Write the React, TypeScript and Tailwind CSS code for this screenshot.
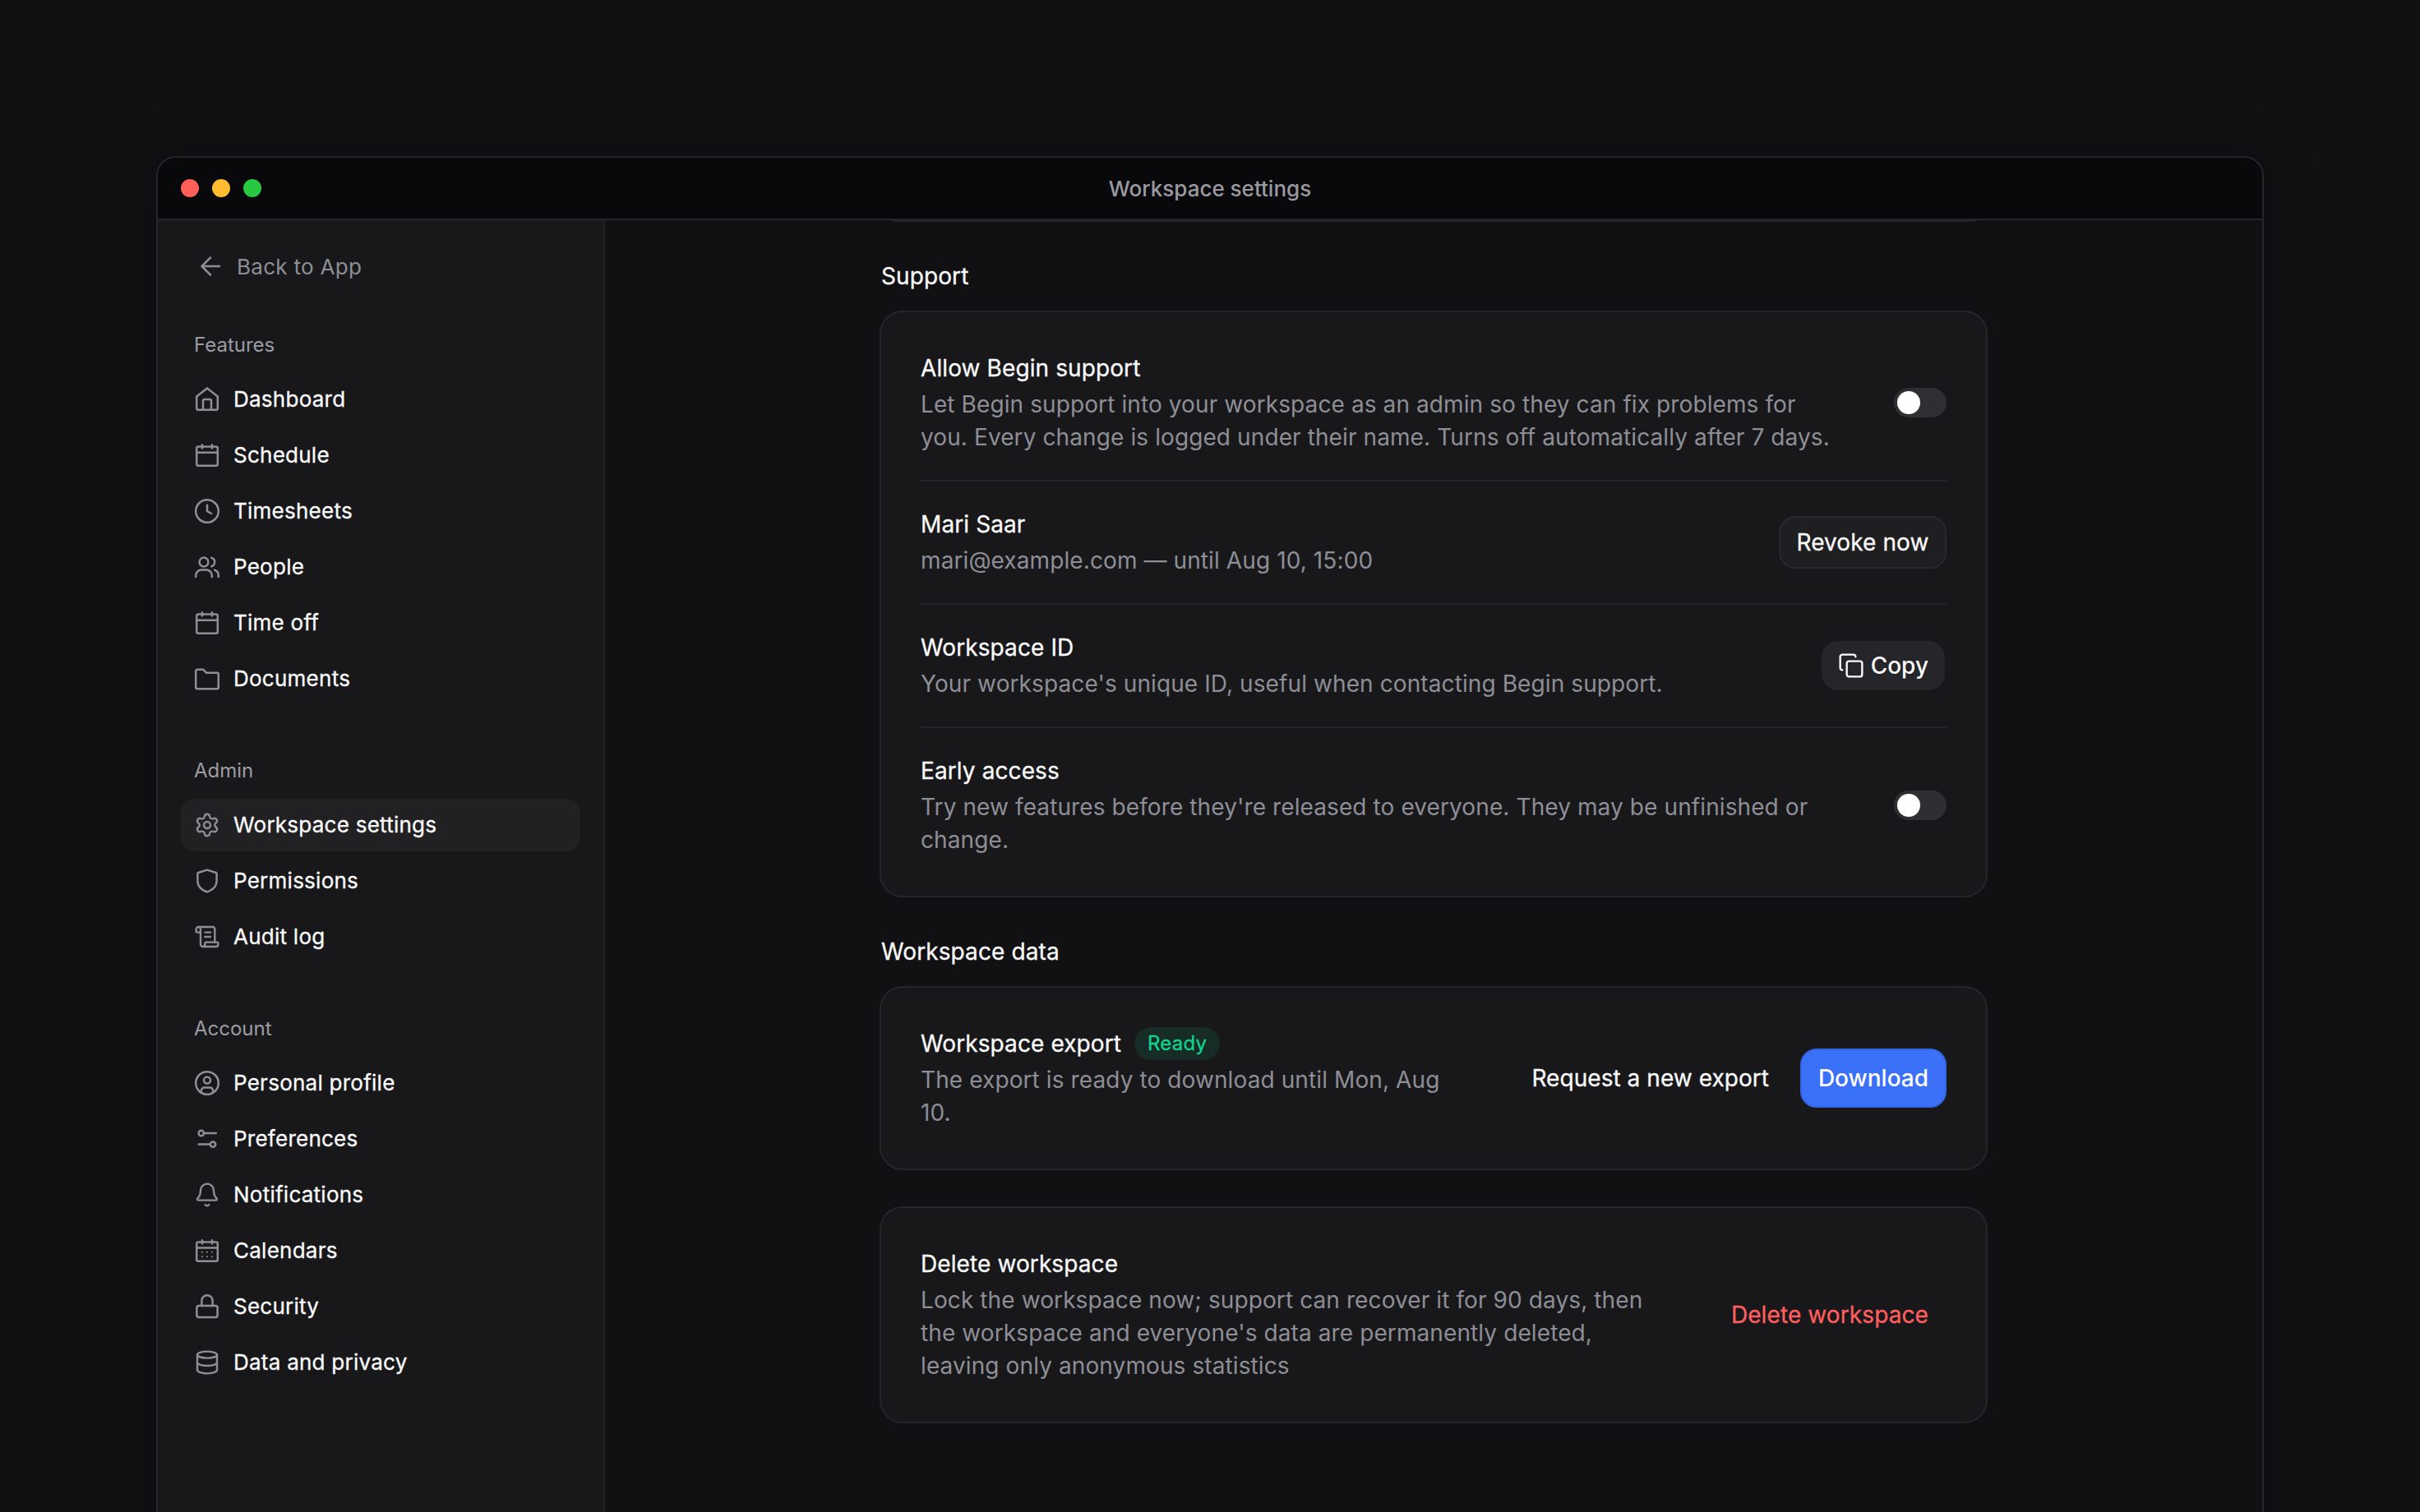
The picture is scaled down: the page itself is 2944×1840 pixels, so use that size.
import { ReactNode } from "react"
import { Bell, Copy, Database, ScrollText, Settings } from "lucide-react"

const Svg = ({ children }: { children: ReactNode }) => (
  <svg viewBox="0 0 16 16" fill="none" stroke="currentColor" strokeWidth="1.25" strokeLinecap="round" strokeLinejoin="round" className="w-8 h-8 shrink-0 text-[#8e8e96]">
    {children}
  </svg>
)

const lucideIcon = "w-8 h-8 shrink-0 text-[#8e8e96]"

const HomeIcon = () => (
  <Svg>
    <path d="M8 1.2 14.4 6.3V13.6a.8.8 0 0 1-.8.8H2.4a.8.8 0 0 1-.8-.8V6.3Z" />
    <path d="M5.5 14.4V9a1 1 0 0 1 1-1h3a1 1 0 0 1 1 1v5.4" />
  </Svg>
)

const CalendarIcon = () => (
  <Svg>
    <rect x="1.6" y="2.8" width="12.8" height="11.6" rx="1" />
    <path d="M1.6 6.4h12.8M5 1.6v2.2M11 1.6v2.2" />
  </Svg>
)

const ClockIcon = () => (
  <Svg>
    <circle cx="8" cy="8" r="6.9" />
    <path d="M8 4.4V8l2.6 1.5" />
  </Svg>
)

const PeopleIcon = () => (
  <Svg>
    <circle cx="6" cy="5" r="2.7" />
    <path d="M1.1 14v-.9a3.3 3.3 0 0 1 3.3-3.3h3.2a3.3 3.3 0 0 1 3.3 3.3v.9" />
    <path d="M10.6 2.4a2.7 2.7 0 0 1 0 5.2M12.6 9.9a3.3 3.3 0 0 1 2.3 3.2v.9" />
  </Svg>
)

const FolderIcon = () => (
  <Svg>
    <path d="M1.1 3.4a1 1 0 0 1 1-1h3.5l2 2h6.3a1 1 0 0 1 1 1v7.7a1 1 0 0 1-1 1H2.1a1 1 0 0 1-1-1Z" />
  </Svg>
)

const ShieldIcon = () => (
  <Svg>
    <path d="M8 1.3 13.4 3a.6.6 0 0 1 .4.6V8c0 3.5-2.8 5.6-5.5 6.6a.9.9 0 0 1-.6 0C5 13.6 2.2 11.5 2.2 8V3.6a.6.6 0 0 1 .4-.6Z" />
  </Svg>
)

const ProfileIcon = () => (
  <Svg>
    <circle cx="8" cy="8" r="6.9" />
    <circle cx="8" cy="6.3" r="2" />
    <path d="M4.4 13v-.3a1.9 1.9 0 0 1 1.9-1.9h3.4a1.9 1.9 0 0 1 1.9 1.9v.3" />
  </Svg>
)

const SlidersIcon = () => (
  <Svg>
    <circle cx="4.4" cy="4.5" r="1.6" />
    <path d="M6 4.5h7.4" />
    <circle cx="11.5" cy="11.3" r="1.6" />
    <path d="M2.9 11.3h7" />
  </Svg>
)

const CalendarDotsIcon = () => (
  <Svg>
    <rect x="1.6" y="2.8" width="12.8" height="11.6" rx="1" />
    <path d="M1.6 6.2h12.8M5 1.6v2.2M11 1.6v2.2" />
    <path strokeWidth="1" d="M5 8.9h.01M8 8.9h.01M11 8.9h.01M5 11.6h.01M8 11.6h.01M11 11.6h.01" />
  </Svg>
)

const LockIcon = () => (
  <Svg>
    <rect x="1.7" y="7.5" width="12.6" height="7" rx="1.2" />
    <path d="M4.7 7.5V4.4a3.3 3.3 0 0 1 6.6 0v3.1" />
  </Svg>
)

const sections = [
  {
    label: "Features",
    className: "mt-[46px]",
    items: [
      { name: "Dashboard", icon: <HomeIcon /> },
      { name: "Schedule", icon: <CalendarIcon /> },
      { name: "Timesheets", icon: <ClockIcon /> },
      { name: "People", icon: <PeopleIcon /> },
      { name: "Time off", icon: <CalendarIcon /> },
      { name: "Documents", icon: <FolderIcon /> },
    ],
  },
  {
    label: "Admin",
    className: "mt-[62px]",
    items: [
      { name: "Workspace settings", icon: <Settings className={lucideIcon} strokeWidth={1.8} />, active: true },
      { name: "Permissions", icon: <ShieldIcon /> },
      { name: "Audit log", icon: <ScrollText className={lucideIcon} strokeWidth={1.8} /> },
    ],
  },
  {
    label: "Account",
    className: "mt-[62px]",
    items: [
      { name: "Personal profile", icon: <ProfileIcon /> },
      { name: "Preferences", icon: <SlidersIcon /> },
      { name: "Notifications", icon: <Bell className={lucideIcon} strokeWidth={1.8} /> },
      { name: "Calendars", icon: <CalendarDotsIcon /> },
      { name: "Security", icon: <LockIcon /> },
      { name: "Data and privacy", icon: <Database className={lucideIcon} strokeWidth={1.8} /> },
    ],
  },
]

function Sidebar() {
  return (
    <aside className="w-[544px] shrink-0 bg-[#18181b] border-r-2 border-[#222225] px-[28px] pt-[24px]">
      <div className="h-[64px] flex items-center gap-4 pl-5 text-[#8e8e96] text-[26px] tracking-[0.3px]">
        <svg viewBox="0 0 32 32" fill="none" stroke="currentColor" strokeWidth="2.5" strokeLinecap="round" strokeLinejoin="round" className="w-8 h-8 shrink-0">
          <path d="M27 16H5.5M16 5.5 5.5 16 16 26.5" />
        </svg>
        Back to App
      </div>
      {sections.map((section) => (
        <div key={section.label} className={section.className}>
          <div className="h-[36px] leading-[36px] px-4 mb-4 text-[24px] text-[#9c9ca3]">{section.label}</div>
          <div className="flex flex-col gap-1">
            {section.items.map((item) => (
              <div key={item.name} className={`h-[64px] rounded-[16px] px-4 flex items-center gap-4 text-[26px] leading-[38px] tracking-[0.25px] [-webkit-text-stroke:0.3px] text-[#fafafa] ${"active" in item ? "bg-[#212124]" : ""}`}>
                {item.icon}
                <span className="pb-[1px]">{item.name}</span>
              </div>
            ))}
          </div>
        </div>
      ))}
    </aside>
  )
}

const Toggle = () => (
  <div className="w-[64px] h-[36px] shrink-0 rounded-full bg-[#2f2f33] p-1">
    <div className="w-[28px] h-[28px] rounded-full bg-white" />
  </div>
)

const Title = ({ children }: { children: ReactNode }) => <div className="text-[28px] leading-[40px] tracking-[0.1px] [-webkit-text-stroke:0.3px] text-[#fafafa]">{children}</div>
const Desc = ({ children }: { children: ReactNode }) => <div className="mt-1 text-[28px] leading-[40px] tracking-[0.1px] text-[#8e8e96]">{children}</div>
const SectionTitle = ({ children }: { children: ReactNode }) => <div className="ml-[2px] mb-[22px] mt-[46px] text-[28px] leading-[40px] tracking-[0.1px] [-webkit-text-stroke:0.3px] text-[#fafafa]">{children}</div>

function Main() {
  return (
    <main className="flex-1 min-w-0 bg-[#111113] overflow-hidden">
      <div className="w-[1348px] mx-auto">
        <div className="h-[40px] -mt-[38px] mb-[46px] rounded-[40px] border-2 border-[#26262a] bg-[#18181b]" />

        <SectionTitle>Support</SectionTitle>
        <div className="rounded-[28px] border-2 border-[#26262a] bg-[#18181b] px-12 py-4">
          <div className="py-8 flex items-center justify-between border-b-2 border-[#26262a]">
            <div className="w-[1120px]">
              <Title>Allow Begin support</Title>
              <Desc>Let Begin support into your workspace as an admin so they can fix problems for you. Every change is logged under their name. Turns off automatically after 7 days.</Desc>
            </div>
            <Toggle />
          </div>
          <div className="py-8 flex items-center justify-between border-b-2 border-[#26262a]">
            <div>
              <Title>Mari Saar</Title>
              <Desc>mari@example.com — until Aug 10, 15:00</Desc>
            </div>
            <button className="h-[64px] w-[204px] rounded-[20px] border-2 border-[#29292d] bg-[#1f1f22] text-[28px] tracking-[0.1px] [-webkit-text-stroke:0.3px] text-[#fafafa]">Revoke now</button>
          </div>
          <div className="py-8 flex items-center justify-between border-b-2 border-[#26262a]">
            <div>
              <Title>Workspace ID</Title>
              <Desc>Your workspace's unique ID, useful when contacting Begin support.</Desc>
            </div>
            <button className="h-[60px] mr-[2px] pl-5 pr-5 flex items-center gap-2 rounded-[20px] bg-[#26262a] text-[28px] font-medium text-[#fafafa]">
              <Copy className="w-8 h-8" strokeWidth={1.8} />
              Copy
            </button>
          </div>
          <div className="py-8 flex items-center justify-between">
            <div className="w-[1120px]">
              <Title>Early access</Title>
              <Desc>Try new features before they're released to everyone. They may be unfinished or change.</Desc>
            </div>
            <Toggle />
          </div>
        </div>

        <SectionTitle>Workspace data</SectionTitle>
        <div className="rounded-[28px] border-2 border-[#26262a] bg-[#18181b] px-12 py-12 flex items-center justify-between">
          <div className="w-[670px]">
            <div className="flex items-center gap-4">
              <Title>Workspace export</Title>
              <span className="h-[40px] px-4 rounded-full bg-[#182c27] text-[24px] leading-[40px] tracking-[0.2px] [-webkit-text-stroke:0.3px] text-[#10d48e]">Ready</span>
            </div>
            <Desc>The export is ready to download until Mon, Aug 10.</Desc>
          </div>
          <div className="flex items-center gap-4">
            <button className="h-[72px] px-[22px] text-[28px] tracking-[0.05px] [-webkit-text-stroke:0.3px] text-[#fafafa]">Request a new export</button>
            <button className="h-[72px] w-[178px] rounded-[20px] border-2 border-[#3366e6] bg-[#3b70f8] text-[28px] font-medium text-white">Download</button>
          </div>
        </div>

        <div className="mt-[44px] rounded-[28px] border-2 border-[#26262a] bg-[#18181b] px-12 py-12 flex items-center justify-between">
          <div className="w-[900px]">
            <Title>Delete workspace</Title>
            <Desc>Lock the workspace now; support can recover it for 90 days, then the workspace and everyone's data are permanently deleted, leaving only anonymous statistics</Desc>
          </div>
          <button className="h-[72px] px-[22px] text-[28px] tracking-[0.1px] [-webkit-text-stroke:0.3px] text-[#ff5f5f]">Delete workspace</button>
        </div>
      </div>
    </main>
  )
}

export default function App() {
  return (
    <div className="h-screen overflow-hidden bg-[#101113] px-[190px] pt-[190px] [font-family:Inter,sans-serif]">
      <div className="h-[1700px] flex flex-col rounded-t-[24px] border-2 border-[#26262a] overflow-hidden shadow-[0_0_60px_rgba(0,0,0,0.25)]">
        <div className="relative h-[76px] shrink-0 bg-[#09090c] border-b-2 border-[#26262a] flex items-center px-[28px] gap-4">
          <span className="w-[22px] h-[22px] rounded-full bg-[#ff5f57]" />
          <span className="w-[22px] h-[22px] rounded-full bg-[#febc2e]" />
          <span className="w-[22px] h-[22px] rounded-full bg-[#28c840]" />
          <div className="absolute inset-0 flex items-center justify-center text-[26px] font-medium text-[#9a9aa0]">Workspace settings</div>
        </div>
        <div className="flex-1 min-h-0 flex">
          <Sidebar />
          <Main />
        </div>
      </div>
    </div>
  )
}
